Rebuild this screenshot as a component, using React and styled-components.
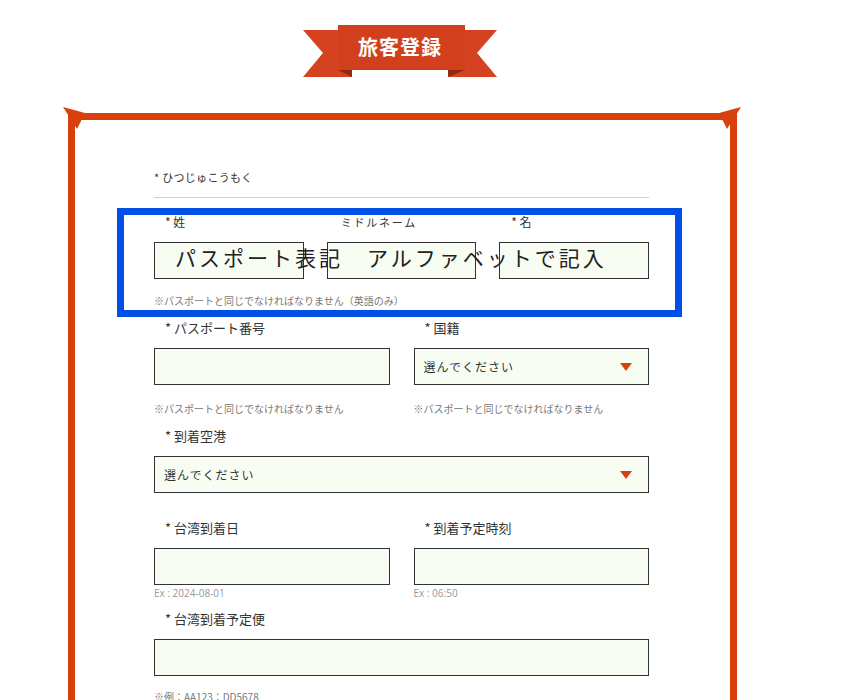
import React from "react"
import styled, { createGlobalStyle } from "styled-components"

const GlobalStyle = createGlobalStyle`
  html, body {
    margin: 0;
    padding: 0;
    background: #fff;
  }
  body {
    font-family: "Noto Sans CJK JP", "Noto Sans", sans-serif;
    color: #333;
  }
  * {
    box-sizing: border-box;
  }
`;

const Page = styled.div`
  width: 669px;
  margin-left: 68px;
  padding-top: 25px;
`;

const BannerWrap = styled.div`
  position: relative;
  width: 194px;
  height: 52px;
  margin-left: 235px;
  display: flex;
  justify-content: center;
  padding-top: 9px;

  svg {
    position: absolute;
    top: 0;
    left: 0;
  }
`;

const BannerTitle = styled.h1`
  position: relative;
  margin: 0;
  font-size: 20px;
  line-height: 26px;
  font-weight: 700;
  letter-spacing: 1px;
  color: #fff;
`;

const Frame = styled.section`
  position: relative;
  margin-top: 36px;
  border: 7px solid #d8410e;
  border-bottom: none;
  padding: 50px 81px 40px 79px;
`;

const Flare = styled.svg`
  position: absolute;
  top: -13px;
  ${props => (props.$right ? "right: -17px;" : "left: -18px;")}
`;

const Heading = styled.div`
  font-size: 11px;
  line-height: 14px;
  letter-spacing: 0.3px;
  color: #333;
`;

const Divider = styled.hr`
  border: none;
  border-top: 1px solid #cfcfcf;
  margin: 13px 0 15px;
`;

const Block = styled.div`
  position: relative;
  margin-bottom: ${props => props.$mb || 11}px;
`;

const Row = styled.div`
  display: grid;
  grid-template-columns: ${props => props.$cols || "1fr"};
  column-gap: ${props => props.$gap || 24}px;
`;

const Field = styled.div`
  display: flex;
  flex-direction: column;
`;

const Label = styled.div`
  font-size: ${props => props.$size || 13}px;
  letter-spacing: ${props => props.$spacing || 0}px;
  line-height: 18px;
  padding-left: ${props => props.$indent || 11}px;
  margin-bottom: 11px;
  color: #333;
  white-space: nowrap;
`;

const Input = styled.input`
  display: block;
  width: 100%;
  height: 37px;
  margin: 0;
  border: 1px solid #333;
  border-radius: 0;
  background: #f7fdf2;
  font-family: inherit;
  outline: none;
`;

const SelectBox = styled.div`
  display: flex;
  align-items: center;
  justify-content: space-between;
  height: 37px;
  padding: 0 16px 0 9px;
  border: 1px solid #333;
  background: #f7fdf2;
  font-size: 12px;
  letter-spacing: 1px;
  color: #333;
`;

const Caret = styled.span`
  width: 0;
  height: 0;
  border-left: 6.5px solid transparent;
  border-right: 6.5px solid transparent;
  border-top: 8px solid #d8410e;
`;

const Note = styled.div`
  margin-top: ${props => props.$mt || 14}px;
  font-size: 10px;
  line-height: 14px;
  color: #777;
  white-space: nowrap;
`;

const Example = styled.div`
  margin-top: 1px;
  font-family: "Open Sans", "Liberation Sans", sans-serif;
  font-size: 10px;
  line-height: 14px;
  color: #999;
`;

const Highlight = styled.div`
  position: absolute;
  top: -5px;
  left: -37px;
  right: -33px;
  bottom: -9px;
  border: 7px solid #0050e6;
  pointer-events: none;
`;

const Overlay = styled.div`
  position: absolute;
  top: 34px;
  left: 21px;
  font-size: 21px;
  line-height: 21px;
  letter-spacing: 3px;
  color: #222;
  white-space: nowrap;
  pointer-events: none;
`;

const Banner = () => (
  <BannerWrap>
    <svg width="194" height="52" viewBox="0 0 194 52">
      <polygon points="0,5 49,5 49,52 0,52 20,28" fill="#d5421f" />
      <polygon points="194,5 145,5 145,52 194,52 174,28" fill="#d5421f" />
      <rect x="35" y="0" width="127" height="45" fill="#d23f1d" />
      <polygon points="35,45 49,45 49,52" fill="#8e2a10" />
      <polygon points="162,45 145,45 145,52" fill="#8e2a10" />
    </svg>
    <BannerTitle>旅客登録</BannerTitle>
  </BannerWrap>
);

const Select = () => (
  <SelectBox>
    <span>選んでください</span>
    <Caret />
  </SelectBox>
);

export default function App() {
  return (
    <Page>
      <GlobalStyle />
      <Banner />
      <Frame>
        <Flare width="28" height="22" viewBox="0 0 28 22">
          <polygon points="6,0 28,6 20,22" fill="#d8410e" />
        </Flare>
        <Flare $right width="28" height="22" viewBox="0 0 28 22">
          <polygon points="22,0 0,6 8,22" fill="#d8410e" />
        </Flare>

        <Heading>* ひつじゅこうもく</Heading>
        <Divider />

        <Block>
          <Row $cols="1fr 1fr 1fr" $gap={23}>
            <Field>
              <Label $size={12}>* 姓</Label>
              <Input readOnly />
            </Field>
            <Field>
              <Label $size={11} $spacing={1.8} $indent={14}>ミドルネーム</Label>
              <Input readOnly />
            </Field>
            <Field>
              <Label $size={12} $indent={12}>* 名</Label>
              <Input readOnly />
            </Field>
          </Row>
          <Note $mt={15}>※パスポートと同じでなければなりません（英語のみ）</Note>
          <Overlay>パスポート表記　アルファベットで記入</Overlay>
          <Highlight />
        </Block>

        <Block>
          <Row $cols="1fr 1fr">
            <Field>
              <Label>* パスポート番号</Label>
              <Input readOnly />
              <Note $mt={17}>※パスポートと同じでなければなりません</Note>
            </Field>
            <Field>
              <Label>* 国籍</Label>
              <Select />
              <Note $mt={17}>※パスポートと同じでなければなりません</Note>
            </Field>
          </Row>
        </Block>

        <Block $mb={26}>
          <Field>
            <Label>* 到着空港</Label>
            <Select />
          </Field>
        </Block>

        <Block $mb={10}>
          <Row $cols="1fr 1fr">
            <Field>
              <Label>* 台湾到着日</Label>
              <Input readOnly />
              <Example>Ex : 2024-08-01</Example>
            </Field>
            <Field>
              <Label>* 到着予定時刻</Label>
              <Input readOnly />
              <Example>Ex : 06:50</Example>
            </Field>
          </Row>
        </Block>

        <Block>
          <Field>
            <Label>* 台湾到着予定便</Label>
            <Input readOnly />
            <Note>※例：AA123：DD5678</Note>
          </Field>
        </Block>
      </Frame>
    </Page>
  );
}
